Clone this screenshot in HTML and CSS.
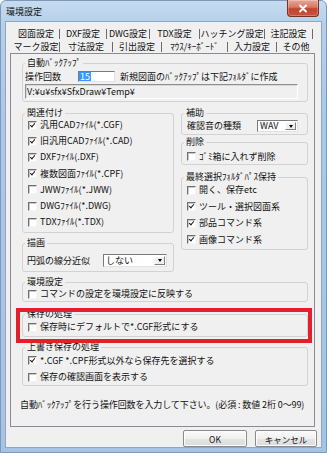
FILE: index.html
```html
<!DOCTYPE html>
<html lang="ja">
<head>
<meta charset="utf-8">
<title>環境設定</title>
<link rel="stylesheet" href="styles.css">
</head>
<body>
<div class="window">
  <div class="titlebar">
    <span class="title">環境設定</span>
    <div class="close">
      <svg width="10" height="9" viewBox="0 0 10 9"><path d="M2 1.5 L8 7.5 M8 1.5 L2 7.5" stroke="#fff" stroke-width="2" stroke-linecap="round"/></svg>
    </div>
  </div>
  <div class="client">
    <div class="tabs">
      <div class="tabrow row1">
        <span class="tab">図面設定</span>
        <span class="tab">DXF設定</span>
        <span class="tab">DWG設定</span>
        <span class="tab">TDX設定</span>
        <span class="tab">ハッチング設定</span>
        <span class="tab">注記設定</span>
      </div>
      <div class="tabrow row2">
        <span class="tab">マーク設定</span>
        <span class="tab">寸法設定</span>
        <span class="tab">引出設定</span>
        <span class="tab">ﾏｳｽ/ｷｰﾎﾞｰﾄﾞ</span>
        <span class="tab">入力設定</span>
        <span class="tab active">その他</span>
      </div>
    </div>

    <div class="panel">
      <fieldset class="group g-backup">
        <legend>自動ﾊﾞｯｸｱｯﾌﾟ</legend>
        <div class="backup-row">
          <span class="lbl lbl-ops">操作回数</span>
          <span class="edit num"><span class="sel">15</span></span>
          <span class="lbl">新規図面のﾊﾞｯｸｱｯﾌﾟは下記ﾌｫﾙﾀﾞに作成</span>
        </div>
        <div class="edit path">V:¥u¥sfx¥SfxDraw¥Temp¥</div>
      </fieldset>

      <div class="columns">
        <div class="col">
          <fieldset class="group g-assoc">
            <legend>関連付け</legend>
            <div class="checks tight">
              <div class="check"><span class="box on"></span>汎用CADﾌｧｲﾙ(*.CGF)</div>
              <div class="check"><span class="box on"></span>旧汎用CADﾌｧｲﾙ(*.CAD)</div>
              <div class="check"><span class="box on"></span>DXFﾌｧｲﾙ(.DXF)</div>
              <div class="check"><span class="box on"></span>複数図面ﾌｧｲﾙ(*.CPF)</div>
              <div class="check"><span class="box"></span>JWWﾌｧｲﾙ(*.JWW)</div>
              <div class="check"><span class="box"></span>DWGﾌｧｲﾙ(*.DWG)</div>
              <div class="check"><span class="box"></span>TDXﾌｧｲﾙ(*.TDX)</div>
            </div>
          </fieldset>
          <fieldset class="group g-draw">
            <legend>描画</legend>
            <div class="field-row draw-row">
              <span class="lbl lbl-arc">円弧の線分近似</span>
              <span class="combo combo-arc"><span class="combo-text">しない</span><span class="combo-btn"></span></span>
            </div>
          </fieldset>
        </div>

        <div class="col">
          <fieldset class="group g-aux">
            <legend>補助</legend>
            <div class="field-row aux-row">
              <span class="lbl lbl-sound">確認音の種類</span>
              <span class="combo combo-wav"><span class="combo-text">WAV</span><span class="combo-btn"></span></span>
            </div>
          </fieldset>
          <fieldset class="group g-del">
            <legend>削除</legend>
            <div class="check single del-row"><span class="box"></span>ｺﾞﾐ箱に入れず削除</div>
          </fieldset>
          <fieldset class="group g-last">
            <legend>最終選択ﾌｫﾙﾀﾞﾊﾟｽ保持</legend>
            <div class="checks">
              <div class="check"><span class="box"></span>開く、保存etc</div>
              <div class="check"><span class="box on"></span>ツール・選択図面系</div>
              <div class="check"><span class="box on"></span>部品コマンド系</div>
              <div class="check"><span class="box on"></span>画像コマンド系</div>
            </div>
          </fieldset>
        </div>
      </div>

      <fieldset class="group g-env">
        <legend>環境設定</legend>
        <div class="check single"><span class="box"></span>コマンドの設定を環境設定に反映する</div>
      </fieldset>

      <div class="highlight">
        <fieldset class="group g-save">
          <legend>保存の処理</legend>
          <div class="check single save-row"><span class="box"></span>保存時にデフォルトで*.CGF形式にする</div>
        </fieldset>
      </div>

      <fieldset class="group g-over">
        <legend>上書き保存の処理</legend>
        <div class="checks">
          <div class="check"><span class="box on"></span>*.CGF *.CPF形式以外なら保存先を選択する</div>
          <div class="check"><span class="box"></span>保存の確認画面を表示する</div>
        </div>
      </fieldset>

      <p class="hint">自動ﾊﾞｯｸｱｯﾌﾟを行う操作回数を入力して下さい。(必須 : 数値 2桁 0～99)</p>
    </div>

    <div class="buttons">
      <button class="btn btn-ok" type="button">OK</button>
      <button class="btn btn-cancel" type="button">キャンセル</button>
    </div>
  </div>
</div>
</body>
</html>
```

FILE: styles.css
```css
* { box-sizing: border-box; }

html, body {
  margin: 0;
  padding: 0;
}

body {
  width: 327px;
  height: 453px;
  overflow: hidden;
  background: #ffffff;
  font-family: "Noto Sans CJK JP", "Noto Sans", sans-serif;
  font-size: 9px;
  line-height: 10px;
  color: #111;
}

/* ---------- window frame ---------- */
.window {
  width: 327px;
  height: 453px;
  display: flex;
  flex-direction: column;
  border: 1px solid #7d98b8;
  border-radius: 6px 6px 0 0;
  background: linear-gradient(180deg, #c6dbf0 0px, #b6d0ea 22px, #abc8e7 120px, #a6c3e4 100%);
}

.titlebar {
  height: 21px;
  flex: none;
  display: flex;
  justify-content: space-between;
  align-items: flex-start;
  padding: 0 7px 0 5px;
}

.title {
  margin-top: 6px;
  font-size: 9px;
  line-height: 10px;
  color: #111;
}

.close {
  width: 32px;
  height: 17px;
  margin-top: -1px;
  display: flex;
  align-items: center;
  justify-content: center;
  border: 1px solid #7b2f25;
  border-top: none;
  border-radius: 0 0 4px 4px;
  background: linear-gradient(180deg, #e8a797 0%, #d87764 45%, #c4432f 55%, #c8533d 100%);
  box-shadow: inset 0 0 0 1px rgba(255, 255, 255, 0.25);
}

/* ---------- client area ---------- */
.client {
  flex: 1;
  margin: 0 5px 5px 5px;
  display: flex;
  flex-direction: column;
  background: #f0f0f0;
  box-shadow: 0 0 0 1px #90a7c2;
}

/* ---------- tabs ---------- */
.tabs {
  height: 31px;
  flex: none;
  padding: 5px 0 0 7px;
}

.tabrow {
  display: grid;
  height: 13px;
  align-items: center;
}

.row1 { grid-template-columns: 47px 47px 43px 50px 65px 48px; }
.row2 { grid-template-columns: 47px 53px 49px 66px 49px 38px; }

.tab {
  height: 10px;
  line-height: 10px;
  text-align: center;
  white-space: nowrap;
  border-right: 1px solid #6b6b6b;
}

.tab.active { border-right: none; }

/* ---------- panel ---------- */
.panel {
  flex: 1;
  margin: 0 6px 0 4px;
  padding: 4px 6px 0 11px;
  border: 1px solid #898c95;
  background: #f0f0f0;
  display: flex;
  flex-direction: column;
  min-height: 0;
}

.group {
  margin: 0;
  padding: 0;
  min-width: 0;
  border: 1px solid #d2d2d2;
  border-radius: 3px;
}

.group legend {
  margin-left: 2px;
  padding: 0 2px;
  height: 10px;
  line-height: 10px;
  white-space: nowrap;
}

.lbl { white-space: nowrap; }

/* backup group */
.backup-row {
  display: flex;
  align-items: center;
  height: 13px;
  margin-top: 2px;
  padding-left: 2px;
}

.lbl-ops { width: 53px; }

.edit {
  background: #fff;
  border: 1px solid;
  border-color: #7a7a7a #e3e3e3 #e3e3e3 #7a7a7a;
}

.num {
  width: 37px;
  height: 11px;
  margin-right: 5px;
  display: flex;
  align-items: center;
}

.sel {
  background: #3399ff;
  color: #fff;
  height: 9px;
  line-height: 9px;
  padding: 0 1px;
}

.path {
  height: 15px;
  margin: 1px 9px 2px 2px;
  padding-left: 1px;
  line-height: 13px;
  background: #f0f0f0;
  border-color: #8f8f8f #ffffff #ffffff #8f8f8f;
  box-shadow: inset 1px 1px 0 #d8d8d8;
}

/* two columns */
.columns {
  display: grid;
  grid-template-columns: 152px 127px;
  column-gap: 7px;
  margin-top: 6px;
  align-items: start;
}

.col {
  display: flex;
  flex-direction: column;
}

.checks {
  padding-left: 5px;
}

.checks.tight { margin-top: -1px; padding-bottom: 2px; }

.g-assoc .check { height: 16.2px; }

.g-last .checks { padding-bottom: 1px; }

.check {
  display: flex;
  align-items: center;
  height: 16.4px;
  white-space: nowrap;
}

.g-last .check,
.g-over .check { height: 16.5px; }

.check.single {
  height: 14px;
  padding-left: 5px;
}

.check.del-row { margin-top: 2px; height: 15px; }
.check.save-row { margin-top: 1px; margin-bottom: 2px; }

.box {
  flex: none;
  width: 9px;
  height: 9px;
  margin-right: 3px;
  background: #fff;
  border: 1px solid;
  border-color: #6f6f6f #f4f4f4 #f4f4f4 #6f6f6f;
  box-shadow: inset 1px 1px 0 #c8c8c8;
  position: relative;
}

.box.on::after {
  content: "";
  position: absolute;
  left: 2px;
  top: 0px;
  width: 2px;
  height: 4px;
  border: solid #1a1a1a;
  border-width: 0 1.5px 1.5px 0;
  transform: rotate(40deg);
}

/* field rows with combo */
.field-row {
  display: flex;
  align-items: center;
}

.draw-row {
  height: 13px;
  margin: 6px 0 4px 0;
  padding-left: 4px;
}

.aux-row {
  height: 12px;
  margin: 2px 0 2px 0;
  padding-left: 5px;
}

.lbl-arc { width: 76px; }
.lbl-sound { width: 70px; }

.combo {
  display: flex;
  align-items: stretch;
  background: #fff;
  border: 1px solid;
  border-color: #7a7a7a #e3e3e3 #e3e3e3 #7a7a7a;
}

.combo-arc { width: 64px; height: 13px; }
.combo-wav { width: 41px; height: 12px; }

.combo-text {
  flex: 1;
  padding-left: 2px;
  line-height: 10px;
  align-self: center;
}

.combo-btn {
  width: 11px;
  flex: none;
  margin: 1px;
  background: #f0f0f0;
  border: 1px solid;
  border-color: #ffffff #808080 #808080 #ffffff;
  display: flex;
  align-items: center;
  justify-content: center;
}

.combo-btn::before {
  content: "";
  width: 0;
  height: 0;
  border-left: 2.5px solid transparent;
  border-right: 2.5px solid transparent;
  border-top: 3px solid #000;
}

/* group spacing */
.g-draw { margin-top: 5px; }
.g-del { margin-top: 2px; }
.g-last { margin-top: 7px; }
.g-env { margin-top: 5px; }

.highlight {
  position: relative;
  margin-top: 7px;
}

.highlight::after {
  content: "";
  position: absolute;
  top: -1px;
  left: -6px;
  right: -4px;
  bottom: -6px;
  border: 4px solid #e2202c;
  pointer-events: none;
}

.g-over { margin-top: 5px; }

.hint {
  margin: 14px 0 0 -2px;
  white-space: nowrap;
  letter-spacing: -0.1px;
}

/* ---------- buttons ---------- */
.buttons {
  height: 17px;
  flex: none;
  margin-top: 3px;
  padding-right: 4px;
  display: flex;
  justify-content: flex-end;
  gap: 8px;
}

.btn {
  height: 17px;
  padding: 0;
  font-family: inherit;
  font-size: 8.5px;
  line-height: 10px;
  color: #111;
  border: 1px solid #8a8a8a;
  border-radius: 2px;
  background: linear-gradient(180deg, #fbfbfb 0%, #f0f0f0 50%, #e5e5e5 51%, #dcdcdc 100%);
  box-shadow: inset 0 0 0 1px #fcfcfc;
}

.btn-ok { width: 64px; }
.btn-cancel { width: 62px; }
```
